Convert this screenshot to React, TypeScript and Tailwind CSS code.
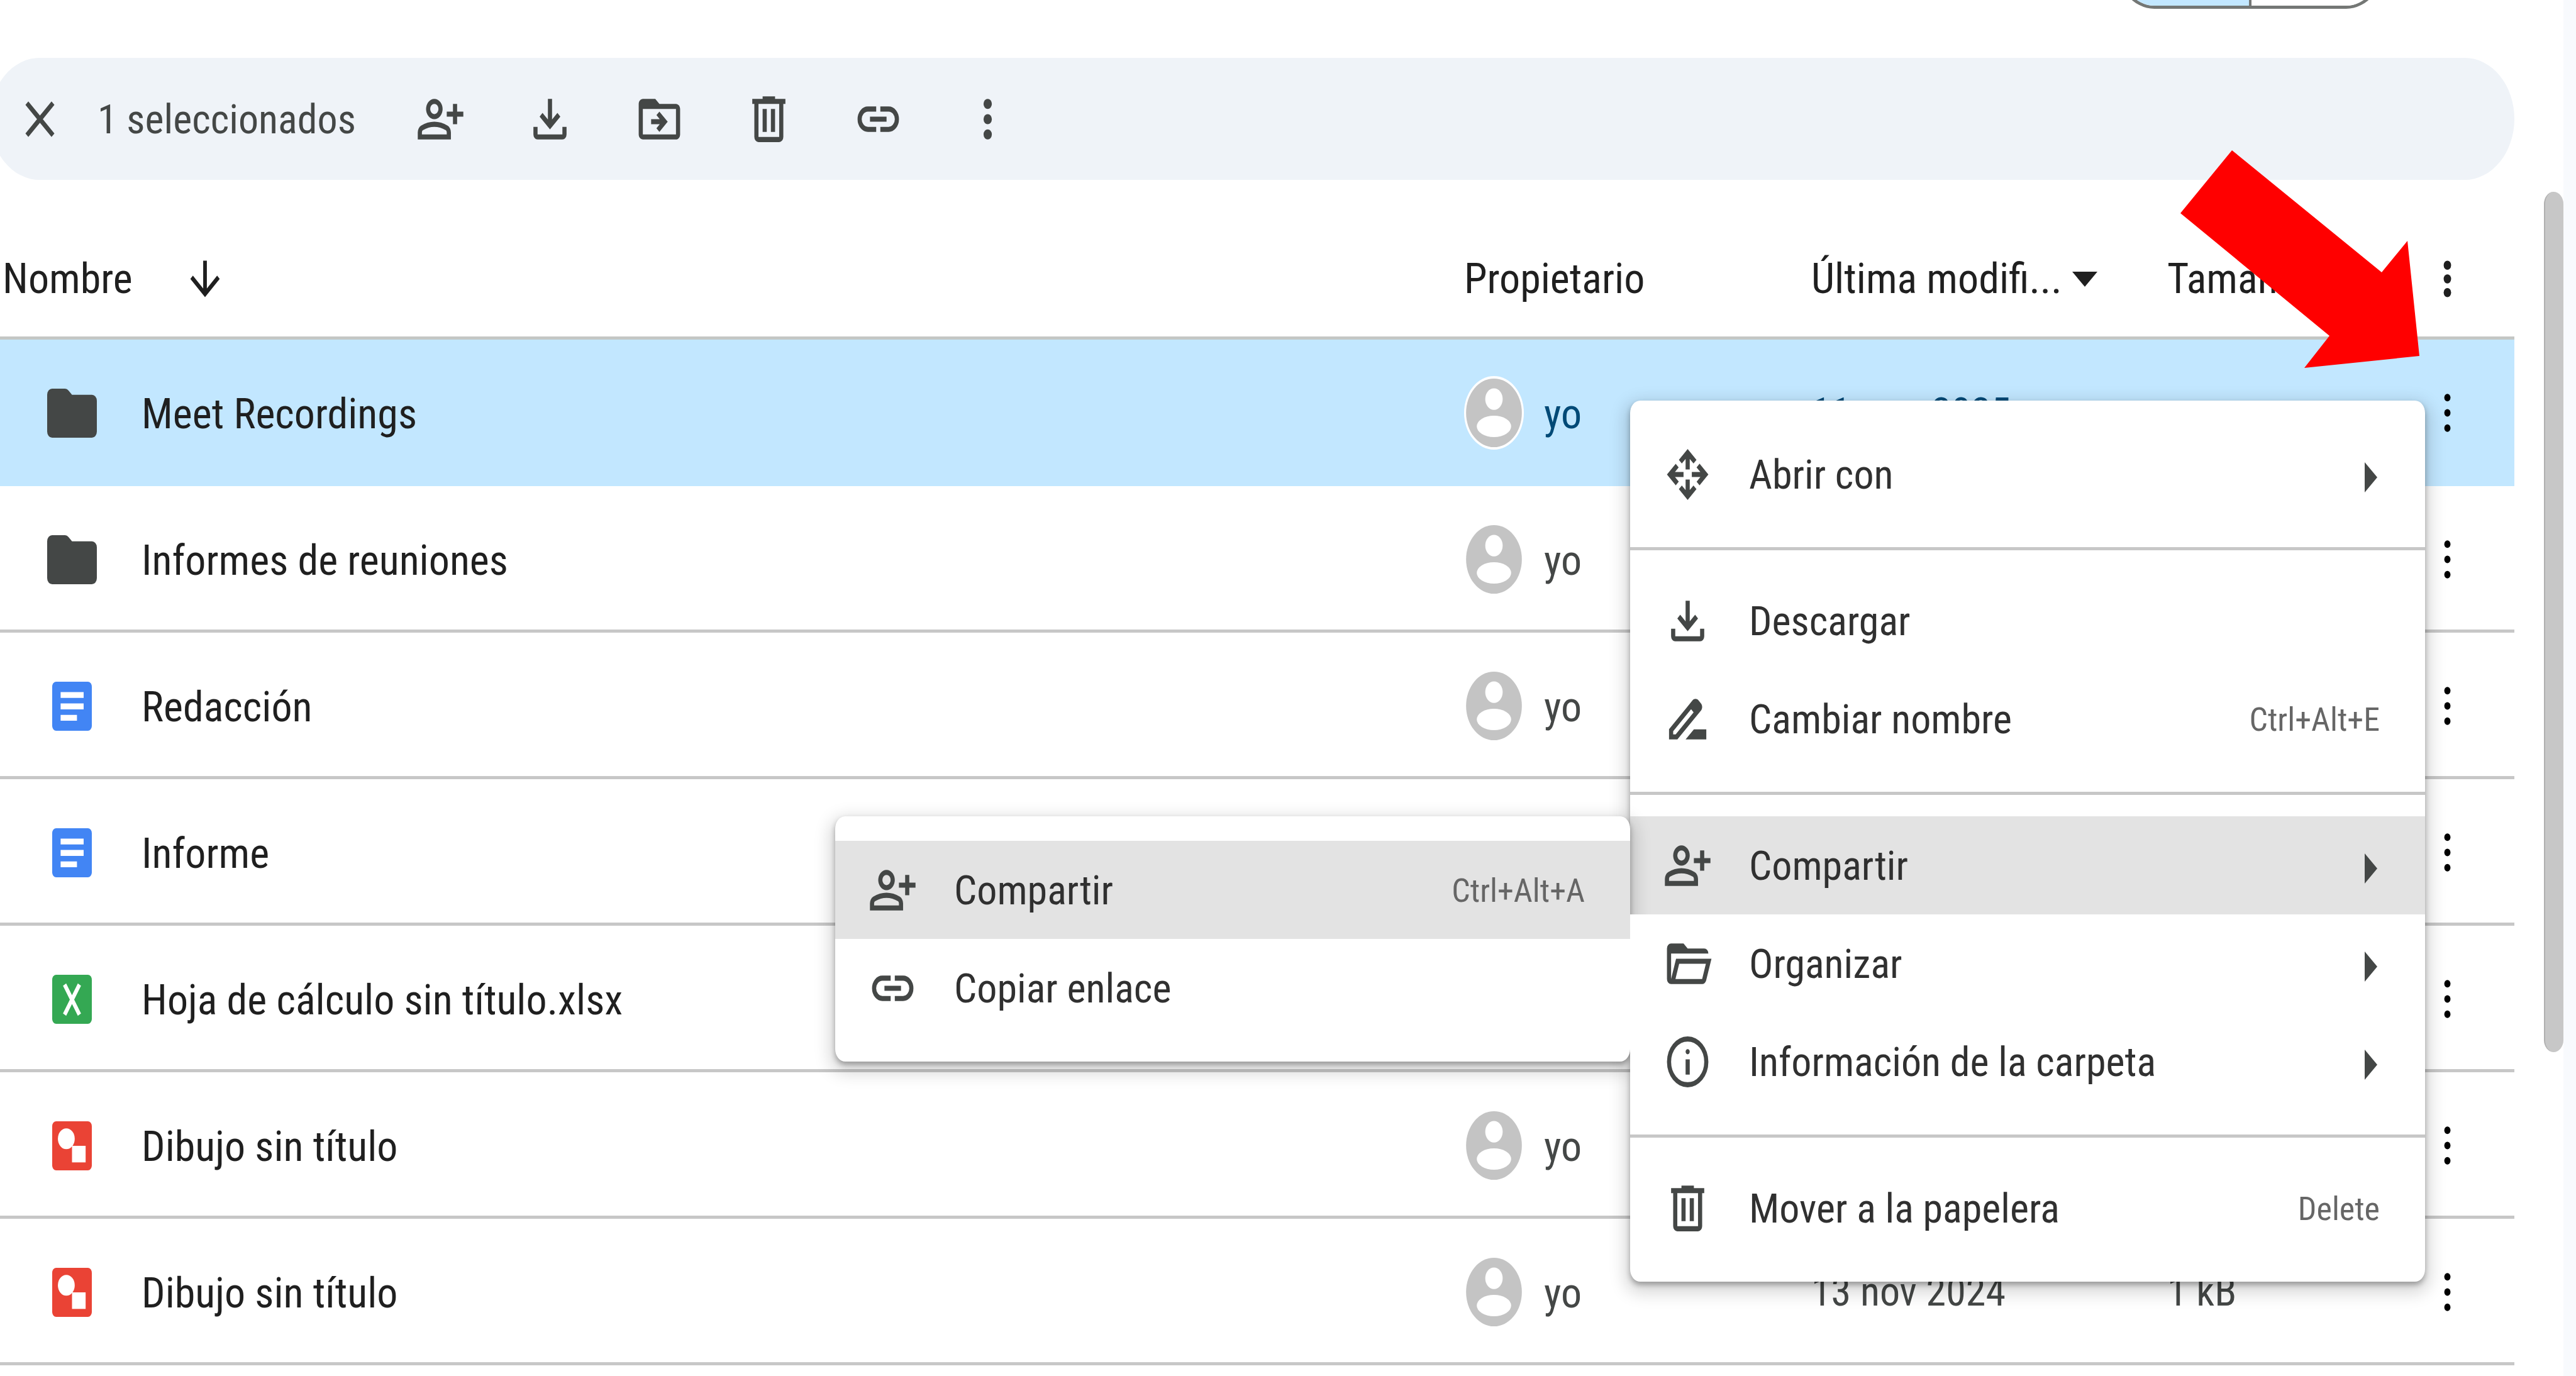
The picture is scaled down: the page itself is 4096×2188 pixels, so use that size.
import React from "react";

type Glyph = { box: string; d: string };

const MS = "0 -960 960 960";

const glyphs: Record<string, Glyph> = {
  close: { box: MS, d: "m256-200-56-56 224-224-224-224 56-56 224 224 224-224 56 56-224 224 224 224-56 56-224-224-224 224Z" },
  personAdd: {
    box: MS,
    d: "M720-400v-120H600v-80h120v-120h80v120h120v80H800v120h-80Zm-360-80q-66 0-113-47t-47-113q0-66 47-113t113-47q66 0 113 47t47 113q0 66-47 113t-113 47ZM40-160v-112q0-34 17.5-62.5T104-378q62-31 126-46.5T360-440q66 0 130 15.5T616-378q29 15 46.5 43.5T680-272v112H40Zm80-80h480v-32q0-11-5.5-20T580-306q-54-27-109-40.5T360-360q-56 0-111 13.5T140-306q-9 5-14.5 14t-5.5 20v32Zm240-320q33 0 56.5-23.5T440-640q0-33-23.5-56.5T360-720q-33 0-56.5 23.5T280-640q0 33 23.5 56.5T360-560Z",
  },
  download: {
    box: MS,
    d: "M480-320 280-520l56-58 104 104v-326h80v326l104-104 56 58-200 200ZM240-160q-33 0-56.5-23.5T160-240v-120h80v120h480v-120h80v120q0 33-23.5 56.5T720-160H240Z",
  },
  move: {
    box: "0 0 24 24",
    d: "M20 6h-8l-2-2H4c-1.1 0-2 .9-2 2v12c0 1.1.9 2 2 2h16c1.1 0 2-.9 2-2V8c0-1.1-.9-2-2-2zm0 12H4V8h16v10zM12.16 12H8v2h4.16l-1.59 1.59L11.99 17 16 13.01 11.99 9l-1.41 1.41L12.16 12z",
  },
  trash: {
    box: MS,
    d: "M280-120q-33 0-56.5-23.5T200-200v-520h-40v-80h200v-40h240v40h200v80h-40v520q0 33-23.5 56.5T680-120H280Zm400-600H280v520h400v-520ZM360-280h80v-360h-80v360Zm160 0h80v-360h-80v360Z",
  },
  link: {
    box: MS,
    d: "M440-280H280q-83 0-141.5-58.5T80-480q0-83 58.5-141.5T280-680h160v80H280q-50 0-85 35t-35 85q0 50 35 85t85 35h160v80ZM320-440v-80h320v80H320Zm200 160v-80h160q50 0 85-35t35-85q0-50-35-85t-85-35H520v-80h160q83 0 141.5 58.5T880-480q0 83-58.5 141.5T680-280H520Z",
  },
  openWith: {
    box: MS,
    d: "M480-80 310-250l57-57 73 73v-166h80v165l72-73 58 58L480-80ZM250-310 80-480l169-169 57 57-72 72h166v80H235l73 72-58 58Zm460 0-57-57 73-73H560v-80h165l-73-72 58-58 170 170-170 170ZM440-560v-166l-73 73-57-57 170-170 170 170-57 57-73-73v166h-80Z",
  },
  rename: {
    box: "0 0 24 24",
    d: "M18.41 5.8L17.2 4.59c-.78-.78-2.05-.78-2.83 0l-2.68 2.68L3 15.96V20h4.04l8.74-8.74 2.63-2.63c.79-.78.79-2.05 0-2.83zM6.21 18H5v-1.21l8.66-8.66 1.21 1.21L6.21 18zM11 20l4-4h6v4H11z",
  },
  organize: {
    box: MS,
    d: "M160-160q-33 0-56.5-23.5T80-240v-480q0-33 23.5-56.5T160-800h240l80 80h320q33 0 56.5 23.5T880-640H160v400l96-320h684L837-217q-8 26-29.5 41.5T760-160H160Zm84-80h516l72-240H316l-72 240Z",
  },
  info: {
    box: MS,
    d: "M440-280h80v-240h-80v240Zm40-320q17 0 28.5-11.5T520-640q0-17-11.5-28.5T480-680q-17 0-28.5 11.5T440-640q0 17 11.5 28.5T480-600Zm0 520q-83 0-156-31.5T197-197q-54-54-85.5-127T80-480q0-83 31.5-156T197-763q54-54 127-85.5T480-880q83 0 156 31.5T763-763q54 54 85.5 127T880-480q0 83-31.5 156T763-197q-54 54-127 85.5T480-80Zm0-80q134 0 227-93t93-227q0-134-93-227t-227-93q-134 0-227 93t-93 227q0 134 93 227t227 93Z",
  },
  arrowDown: { box: MS, d: "M440-800v487L216-537l-56 57 320 320 320-320-56-57-224 224v-487h-80Z" },
};

function Icon({ name, className = "h-[97px] w-[79px]" }: { name: string; className?: string }) {
  const g = glyphs[name];
  return (
    <svg viewBox={g.box} preserveAspectRatio="none" fill="currentColor" aria-hidden="true" className={`block shrink-0 ${className}`}>
      <path d={g.d} />
    </svg>
  );
}

function Dots({ r, className = "h-[97px] w-[79px]" }: { r: number; className?: string }) {
  return (
    <svg viewBox="0 0 24 24" preserveAspectRatio="none" fill="currentColor" aria-hidden="true" className={`block ${className}`}>
      <circle cx="12" cy="6" r={r} />
      <circle cx="12" cy="12" r={r} />
      <circle cx="12" cy="18" r={r} />
    </svg>
  );
}

type Kind = "folder" | "doc" | "sheet" | "drawing";

function FileIcon({ kind }: { kind: Kind }) {
  if (kind === "folder") {
    return (
      <svg viewBox="2 4 20 16" preserveAspectRatio="none" aria-hidden="true" className="block h-[78px] w-[79px]">
        <path fill="#444746" d="M10.6 4.6 12 6h8a2 2 0 0 1 2 2v10a2 2 0 0 1-2 2H4a2 2 0 0 1-2-2V6a2 2 0 0 1 2-2h5.200a2 2 0 0 1 1.400.6z" />
      </svg>
    );
  }
  return (
    <svg viewBox="0 0 16 16" preserveAspectRatio="none" aria-hidden="true" className="block h-[78px] w-[63px]">
      {kind === "doc" && (
        <>
          <rect width="16" height="16" rx="1.6" fill="#4285f4" />
          <path fill="#fff" d="M3.400 3.400h9.300v1.900H3.400zM3.400 7.100h9.300V9H3.400zM3.400 10.800H10v1.900H3.400z" />
        </>
      )}
      {kind === "sheet" && (
        <>
          <rect width="16" height="16" rx="1.6" fill="#34a853" />
          <path stroke="#fff" strokeWidth="1.500" fill="none" d="M5 3.200l6 9.800M11 3.200L5 13" />
        </>
      )}
      {kind === "drawing" && (
        <>
          <rect width="16" height="16" rx="1.6" fill="#ea4335" />
          <circle cx="5.700" cy="5.700" r="3.400" fill="#fff" />
          <rect x="8" y="8" width="5.500" height="5.400" fill="#fff" />
        </>
      )}
    </svg>
  );
}

function Avatar() {
  return (
    <svg viewBox="0 0 24 24" preserveAspectRatio="none" aria-hidden="true" className="block h-[117px] w-[95px] shrink-0">
      <circle cx="12" cy="12" r="12" fill="#fff" />
      <circle cx="12" cy="12" r="11.200" fill="#c4c4c4" />
      <circle cx="12" cy="7.500" r="3.500" fill="#fff" />
      <ellipse cx="12" cy="16.400" rx="6.900" ry="3.500" fill="#fff" />
    </svg>
  );
}

type FileRow = { name: string; kind: Kind; owner?: string; date?: string; size?: string; selected?: boolean };

const rows: FileRow[] = [
  { name: "Meet Recordings", kind: "folder", owner: "yo", date: "11 mar 2025", selected: true },
  { name: "Informes de reuniones", kind: "folder", owner: "yo" },
  { name: "Redacción", kind: "doc", owner: "yo" },
  { name: "Informe", kind: "doc" },
  { name: "Hoja de cálculo sin título.xlsx", kind: "sheet" },
  { name: "Dibujo sin título", kind: "drawing", owner: "yo" },
  { name: "Dibujo sin título", kind: "drawing", owner: "yo", date: "13 nov 2024", size: "1 kB" },
];

const actions = [
  { icon: "personAdd", label: "Compartir" },
  { icon: "download", label: "Descargar" },
  { icon: "move", label: "Mover" },
  { icon: "trash", label: "Mover a la papelera" },
  { icon: "link", label: "Copiar enlace" },
];

type ItemProps = {
  icon: string;
  label: string;
  shortcut?: string;
  arrow?: boolean;
  active?: boolean;
  children?: React.ReactNode;
};

function MenuItem({ icon, label, shortcut, arrow, active, children }: ItemProps) {
  return (
    <li role="none" className="relative">
      <button
        type="button"
        role="menuitem"
        className={`flex h-[156px] w-full items-center pr-[72px] pl-[52px] text-left text-[#303030] ${active ? "bg-[#e3e3e3]" : "bg-white"}`}
      >
        <span className="text-[#444746]">
          <Icon name={icon} />
        </span>
        <span className="ml-[58px] flex-1 pt-1 whitespace-nowrap">{label}</span>
        {shortcut && <span className="pt-1 text-[52px] text-[#666666]">{shortcut}</span>}
        {arrow && (
          <svg viewBox="0 0 20 58" aria-hidden="true" className="mr-1 block h-[58px] w-[20px]">
            <path fill="#444746" d="M0 10l20 24L0 58z" />
          </svg>
        )}
      </button>
      {children}
    </li>
  );
}

function Divider() {
  return <li role="separator" className="mt-[38px] mb-[34px] h-[5px] bg-[#c7c7c7]" />;
}

const panel =
  "w-[1264px] rounded-[16px/20px] bg-white py-[39px] shadow-[0_10px_26px_9px_rgba(0,0,0,0.15),0_5px_9px_rgba(0,0,0,0.3)]";

function ContextMenu() {
  return (
    <ul role="menu" className={`absolute top-[637px] right-[240px] ${panel}`}>
      <MenuItem icon="openWith" label="Abrir con" arrow />
      <Divider />
      <MenuItem icon="download" label="Descargar" />
      <MenuItem icon="rename" label="Cambiar nombre" shortcut="Ctrl+Alt+E" />
      <Divider />
      <MenuItem icon="personAdd" label="Compartir" arrow active>
        <ul role="menu" className={`absolute top-0 right-full ${panel}`}>
          <MenuItem icon="personAdd" label="Compartir" shortcut="Ctrl+Alt+A" active />
          <MenuItem icon="link" label="Copiar enlace" />
        </ul>
      </MenuItem>
      <MenuItem icon="organize" label="Organizar" arrow />
      <MenuItem icon="info" label="Información de la carpeta" arrow />
      <Divider />
      <MenuItem icon="trash" label="Mover a la papelera" shortcut="Delete" />
    </ul>
  );
}

export default function App() {
  return (
    <div className="relative flex h-screen overflow-hidden bg-white font-['Roboto_Condensed','Liberation_Sans_Narrow',Roboto,sans-serif] text-[64px] leading-[80px] text-[#1f1f1f]">
      <main className="flex min-w-0 flex-1 flex-col">
        <div className="-mt-[141px] mr-[205px] flex h-[155px] w-[430px] shrink-0 self-end overflow-hidden rounded-[63px/78px] border-[5px] border-[#747775]">
          <button type="button" aria-label="Vista de lista" className="flex-1 bg-[#c2e7ff]" />
          <button type="button" aria-label="Vista de cuadrícula" className="flex-1 border-l-4 border-[#747775] bg-white" />
        </div>

        <div className="mt-[78px] -ml-4 flex h-[194px] shrink-0 items-center rounded-[79px/97px] bg-[#eff3f8] pl-[40px] text-[#444746]">
          <button type="button" aria-label="Cancelar selección">
            <Icon name="close" />
          </button>
          <span className="ml-[52px] w-[458px] pt-1 whitespace-nowrap">1 seleccionados</span>
          {actions.map((a) => (
            <button key={a.icon} type="button" aria-label={a.label} className="flex w-[174px] justify-center">
              <Icon name={a.icon} />
            </button>
          ))}
          <button type="button" aria-label="Más acciones" className="flex w-[174px] justify-center">
            <Dots r={2} />
          </button>
        </div>

        <table className="mt-[62px] w-full table-fixed border-separate border-spacing-0 text-left text-[66px]">
          <colgroup>
            <col />
            <col className="w-[552px]" />
            <col className="w-[566px]" />
            <col className="w-[338px]" />
            <col className="w-[214px]" />
          </colgroup>
          <thead>
            <tr className="h-[192px] whitespace-nowrap">
              <th className="border-b-[5px] border-[#c4c7c5] p-0 pt-1 font-normal">
                <button type="button" className="flex items-center pl-1">
                  Nombre
                  <Icon name="arrowDown" className="ml-[80px] h-[87px] w-[70px]" />
                </button>
              </th>
              <th className="border-b-[5px] border-[#c4c7c5] p-0 pt-1 font-normal">Propietario</th>
              <th className="border-b-[5px] border-[#c4c7c5] p-0 pt-1 font-normal">
                <button type="button" className="flex items-center">
                  Última modifi...
                  <svg viewBox="0 0 40 24" aria-hidden="true" className="ml-[16px] block h-[24px] w-[40px]">
                    <path fill="#1f1f1f" d="M0 0h40L20 24z" />
                  </svg>
                </button>
              </th>
              <th className="border-b-[5px] border-[#c4c7c5] p-0 pt-1 font-normal">Tamaño</th>
              <th className="border-b-[5px] border-[#c4c7c5] p-0 pt-1">
                <button type="button" aria-label="Opciones de columnas" className="mx-auto block">
                  <Dots r={2} className="h-[87px] w-[71px]" />
                </button>
              </th>
            </tr>
          </thead>
          <tbody>
            {rows.map((row, i) => {
              const cell = row.selected
                ? "border-b-[5px] border-[#c2e7ff] bg-[#c2e7ff] p-0 pt-[5px]"
                : "border-b-[5px] border-[#c7c7c7] p-0 pt-[5px]";
              const muted = row.selected ? "text-[#004a77]" : "text-[#444746]";
              return (
                <tr key={i} className="h-[233px] whitespace-nowrap">
                  <td className={cell}>
                    <div className="flex items-center">
                      <span className="ml-[75px] flex w-[79px] justify-center">
                        <FileIcon kind={row.kind} />
                      </span>
                      <span className="ml-[71px] pt-1">{row.name}</span>
                    </div>
                  </td>
                  <td className={cell}>
                    <div className={`flex items-center gap-8 ${muted}`}>
                      <Avatar />
                      <span className="pt-1">{row.owner}</span>
                    </div>
                  </td>
                  <td className={`${cell} text-[64px] ${muted}`}>{row.date}</td>
                  <td className={`${cell} text-[64px] ${muted}`}>{row.size}</td>
                  <td className={cell}>
                    <button type="button" aria-label={`Más acciones: ${row.name}`} className="mx-auto block text-black">
                      <Dots r={1.5} />
                    </button>
                  </td>
                </tr>
              );
            })}
          </tbody>
        </table>
      </main>

      <div className="w-[78px] shrink-0 pt-[305px] pl-[47px]">
        <div className="h-[1368px] rounded-[16px/20px] border-l-2 border-[#b0b0b0] bg-[#c7c7c7]" />
      </div>
      <div className="w-[20px] shrink-0 bg-[#f8fafd]" />

      <ContextMenu />

      <svg viewBox="0 0 380 346" aria-hidden="true" className="absolute top-[239px] right-[249px] h-[346px] w-[380px]">
        <path fill="#ff0000" d="M82 0L0 100l237 195-40 51 183-19-19-183-41 50z" />
      </svg>
    </div>
  );
}
